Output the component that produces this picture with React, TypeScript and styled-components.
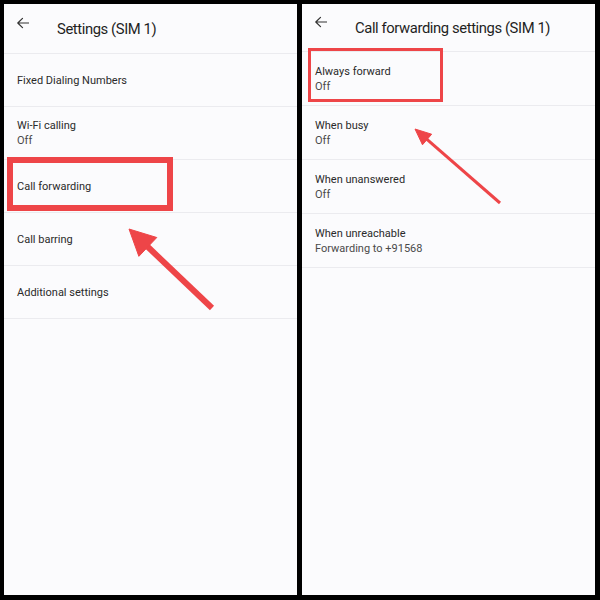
import React from "react";
import styled, { createGlobalStyle } from "styled-components";

const Global = createGlobalStyle`
  html, body { margin: 0; padding: 0; background: #000; }
  body { font-family: Roboto, "Noto Sans", "Liberation Sans", sans-serif; }
`;

const Frame = styled.div`
  width: 600px;
  height: 600px;
  box-sizing: border-box;
  padding: 4px 5px 5px 4px;
  background: #000;
  display: grid;
  grid-template-columns: 293px 293px;
  column-gap: 5px;
`;

const Screen = styled.div`
  position: relative;
  background: #fbfbfd;
  overflow: hidden;
`;

const Header = styled.div<{ $h: number }>`
  height: ${(p) => p.$h}px;
  display: flex;
  align-items: center;
  padding-left: 13px;
  border-bottom: 1px solid #ebebef;
  box-sizing: border-box;
`;

const Back = styled.span`
  display: flex;
  width: 12px;
  height: 12px;
  margin-bottom: 12px;
  margin-right: 28px;
`;

const Title = styled.div`
  font-size: 14.8px;
  color: #1f1f1f;
  letter-spacing: -0.4px;
`;

const Row = styled.div<{ $h: number }>`
  height: ${(p) => p.$h}px;
  box-sizing: border-box;
  border-bottom: 1px solid #ebebef;
  display: flex;
  flex-direction: column;
  justify-content: center;
  padding-left: 13px;
  gap: 2px;
`;

const Label = styled.div`
  font-size: 11px;
  line-height: 13px;
  color: #2a2a2a;
`;

const Sub = styled.div`
  font-size: 11px;
  line-height: 13px;
  color: #4a4a4a;
`;

const Highlight = styled.div<{ $l: number; $t: number; $w: number; $h: number; $b: number }>`
  position: absolute;
  left: ${(p) => p.$l}px;
  top: ${(p) => p.$t}px;
  width: ${(p) => p.$w}px;
  height: ${(p) => p.$h}px;
  box-sizing: border-box;
  border: ${(p) => p.$b}px solid #ee4548;
`;

const Overlay = styled.svg`
  position: absolute;
  left: 0;
  top: 0;
  width: 100%;
  height: 100%;
  pointer-events: none;
`;

const BackArrow = () => (
  <svg width="12" height="12" viewBox="0 0 12 12" fill="none" stroke="#333" strokeWidth="1.2" strokeLinecap="round" strokeLinejoin="round">
    <path d="M11.5 6H0.8M5.5 1.3L0.8 6l4.7 4.7" />
  </svg>
);

type Item = { label: string; sub?: string };

const leftItems: Item[] = [
  { label: "Fixed Dialing Numbers" },
  { label: "Wi-Fi calling", sub: "Off" },
  { label: "Call forwarding" },
  { label: "Call barring" },
  { label: "Additional settings" },
];

const rightItems: Item[] = [
  { label: "Always forward", sub: "Off" },
  { label: "When busy", sub: "Off" },
  { label: "When unanswered", sub: "Off" },
  { label: "When unreachable", sub: "Forwarding to +91568" },
];

const Arrow = ({ tip, tail, head, half, w }: { tip: [number, number]; tail: [number, number]; head: number; half: number; w: number }) => {
  const dx = tip[0] - tail[0];
  const dy = tip[1] - tail[1];
  const len = Math.hypot(dx, dy);
  const ux = dx / len;
  const uy = dy / len;
  const bx = tip[0] - ux * head;
  const by = tip[1] - uy * head;
  const nx = -uy;
  const ny = ux;
  const pts = `${tip[0]},${tip[1]} ${bx + nx * half},${by + ny * half} ${bx - nx * half},${by - ny * half}`;
  return (
    <g>
      <line x1={tail[0]} y1={tail[1]} x2={bx + ux * 2} y2={by + uy * 2} stroke="#ee4548" strokeWidth={w} strokeLinecap="butt" />
      <polygon points={pts} fill="#ee4548" stroke="#ee4548" strokeWidth="1" strokeLinejoin="round" />
    </g>
  );
};

const Panel = ({ title, items, headerH, rowH, children }: { title: string; items: Item[]; headerH: number; rowH: number; children?: React.ReactNode }) => (
  <Screen>
    <Header $h={headerH}>
      <Back>
        <BackArrow />
      </Back>
      <Title>{title}</Title>
    </Header>
    {items.map((it) => (
      <Row key={it.label} $h={rowH}>
        <Label>{it.label}</Label>
        {it.sub && <Sub>{it.sub}</Sub>}
      </Row>
    ))}
    {children}
  </Screen>
);

export default function App() {
  return (
    <>
      <Global />
      <Frame>
        <Panel title="Settings (SIM 1)" items={leftItems} headerH={50} rowH={53}>
          <Highlight $l={3} $t={153} $w={166} $h={54} $b={6} />
          <Overlay>
            <Arrow tip={[125, 225]} tail={[208, 304]} head={26} half={13} w={6} />
          </Overlay>
        </Panel>
        <Panel title="Call forwarding settings (SIM 1)" items={rightItems} headerH={48} rowH={54}>
          <Highlight $l={6} $t={44} $w={135} $h={54} $b={3} />
          <Overlay>
            <Arrow tip={[113, 125]} tail={[198, 199]} head={16} half={7} w={3} />
          </Overlay>
        </Panel>
      </Frame>
    </>
  );
}
